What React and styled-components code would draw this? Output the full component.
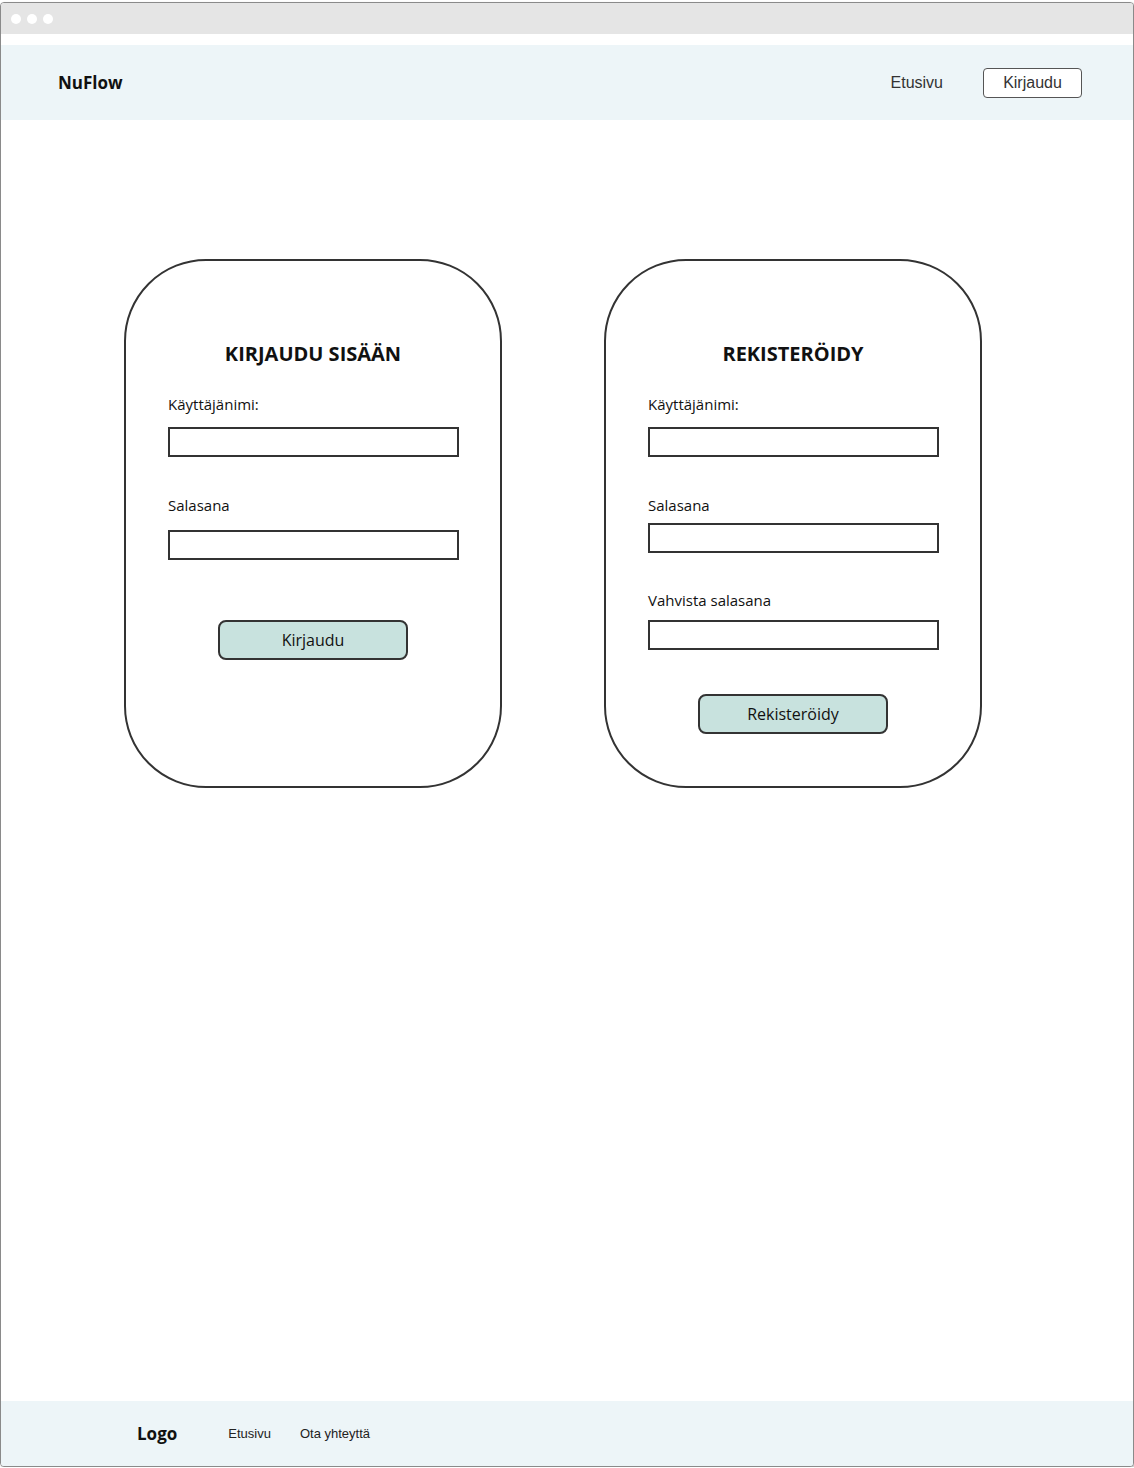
import React from 'react';
import styled, { createGlobalStyle } from 'styled-components';

const GlobalStyle = createGlobalStyle`
  body {
    margin: 0;
    background: #fff;
    font-family: "Open Sans", "Liberation Sans", sans-serif;
    color: #111;
  }
`;

const Frame = styled.div`
  width: 1132px;
  height: 1463px;
  margin-top: 2px;
  border: 1px solid #8a8a8a;
  border-radius: 4px;
  box-shadow: 1px 1px 2px rgba(0, 0, 0, 0.25);
  display: flex;
  flex-direction: column;
  overflow: hidden;
  background: #fff;
`;

const TitleBar = styled.div`
  height: 31px;
  background: #e5e5e5;
  display: flex;
  align-items: center;
  gap: 6px;
  padding-left: 10px;
`;

const Dot = styled.span`
  width: 10px;
  height: 10px;
  border-radius: 50%;
  background: #fff;
`;

const Header = styled.header`
  margin-top: 11px;
  height: 75px;
  background: #edf5f8;
  display: flex;
  align-items: center;
  padding: 0 51px 0 57px;
`;

const Brand = styled.div`
  font-weight: 700;
  font-size: 17px;
  flex: 1;
`;

const NavLink = styled.a`
  font-family: "Liberation Sans", Arial, sans-serif;
  font-size: 16px;
  color: #333;
  text-decoration: none;
  margin-right: 40px;
`;

const NavButton = styled.button`
  width: 99px;
  height: 30px;
  border: 1px solid #555;
  border-radius: 4px;
  background: #fff;
  font-family: "Liberation Sans", Arial, sans-serif;
  font-size: 16px;
  color: #333;
`;

const Main = styled.main`
  flex: 1;
  display: flex;
  align-items: flex-start;
  gap: 102px;
  padding: 139px 0 0 123px;
`;

const Card = styled.section`
  box-sizing: border-box;
  width: 378px;
  height: 529px;
  border: 2px solid #333;
  border-radius: 82px;
  display: flex;
  flex-direction: column;
  padding: 81px 42px 0;
`;

const Title = styled.h2`
  margin: 0 0 28px;
  text-align: center;
  font-size: 20px;
  line-height: 24px;
  font-weight: 700;
`;

const Label = styled.label`
  font-size: 15px;
  line-height: 20px;
  margin-top: ${(p) => p.$top || 0}px;
`;

const Input = styled.input`
  box-sizing: border-box;
  width: 291px;
  height: 30px;
  margin-top: ${(p) => p.$top}px;
  border: 2px solid #333;
  border-radius: 0;
  background: #fff;
`;

const Submit = styled.button`
  align-self: center;
  width: 190px;
  height: 40px;
  margin-top: ${(p) => p.$top}px;
  background: #c8e2de;
  border: 2px solid #333;
  border-radius: 8px;
  font-family: "Open Sans", sans-serif;
  font-size: 16px;
  color: #111;
`;

const Footer = styled.footer`
  height: 65px;
  background: #edf5f8;
  display: flex;
  align-items: center;
  padding-left: 136px;
`;

const FooterLogo = styled.div`
  font-weight: 700;
  font-size: 17px;
  margin-right: 51px;
`;

const FooterLink = styled.a`
  font-family: "Liberation Sans", Arial, sans-serif;
  font-size: 13px;
  color: #222;
  text-decoration: none;
  margin-right: 29px;
`;

export default function App() {
  return (
    <>
      <GlobalStyle />
      <Frame>
        <TitleBar>
          <Dot />
          <Dot />
          <Dot />
        </TitleBar>
        <Header>
          <Brand>NuFlow</Brand>
          <NavLink href="#">Etusivu</NavLink>
          <NavButton>Kirjaudu</NavButton>
        </Header>
        <Main>
          <Card>
            <Title>KIRJAUDU SISÄÄN</Title>
            <Label>Käyttäjänimi:</Label>
            <Input $top={13} />
            <Label $top={38}>Salasana</Label>
            <Input $top={15} type="password" />
            <Submit $top={60}>Kirjaudu</Submit>
          </Card>
          <Card>
            <Title>REKISTERÖIDY</Title>
            <Label>Käyttäjänimi:</Label>
            <Input $top={13} />
            <Label $top={38}>Salasana</Label>
            <Input $top={8} type="password" />
            <Label $top={37}>Vahvista salasana</Label>
            <Input $top={10} type="password" />
            <Submit $top={44}>Rekisteröidy</Submit>
          </Card>
        </Main>
        <Footer>
          <FooterLogo>Logo</FooterLogo>
          <FooterLink href="#">Etusivu</FooterLink>
          <FooterLink href="#">Ota yhteyttä</FooterLink>
        </Footer>
      </Frame>
    </>
  );
}
